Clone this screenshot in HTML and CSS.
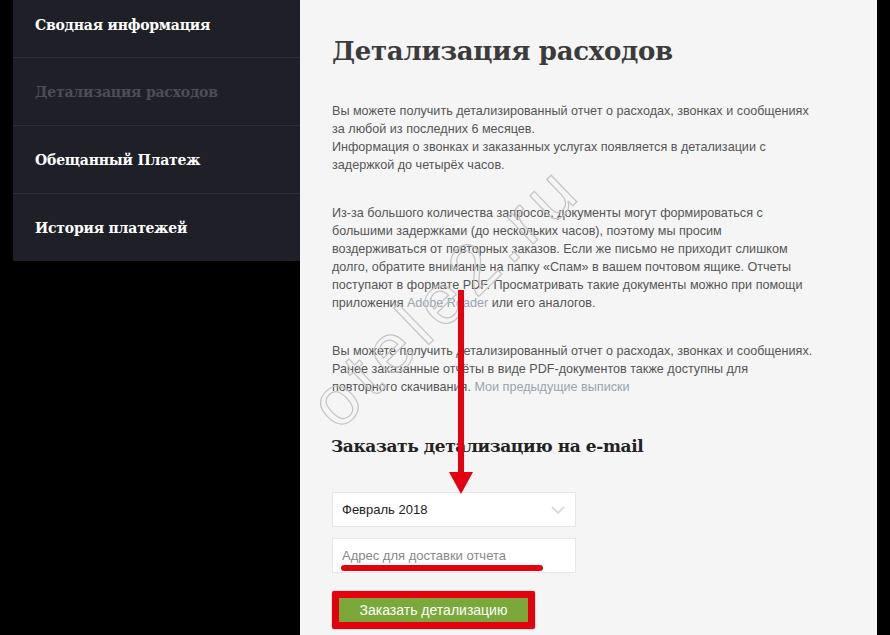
FILE: index.html
```html
<!DOCTYPE html>
<html>
<head>
  <title>Детализация расходов</title>
  <link rel="stylesheet" href="styles.css">
</head>
<body>
  <div class="aside">
    <ul class="menu">
      <li class="menu-item first"><a href="#">Сводная информация</a></li>
      <li class="menu-item active"><a href="#">Детализация расходов</a></li>
      <li class="menu-item"><a href="#">Обещанный Платеж</a></li>
      <li class="menu-item"><a href="#">История платежей</a></li>
    </ul>
  </div>

  <div class="main">
    <h1>Детализация расходов</h1>

    <p class="text">
      Вы можете получить детализированный отчет о расходах, звонках и сообщениях
      за любой из последних 6 месяцев.<br>
      Информация о звонках и заказанных услугах появляется в детализации с
      задержкой до четырёх часов.
    </p>

    <p class="text">
      Из-за большого количества запросов, документы могут формироваться с
      большими задержками (до нескольких часов), поэтому мы просим
      воздерживаться от повторных заказов. Если же письмо не приходит слишком
      долго, обратите внимание на папку «Спам» в вашем почтовом ящике. Отчеты
      поступают в формате PDF. Просматривать такие документы можно при помощи
      приложения <a href="#">Adobe Reader</a> или его аналогов.
    </p>

    <p class="text">
      Вы можете получить детализированный отчет о расходах, звонках и сообщениях.
      Ранее заказанные отчёты в виде PDF-документов также доступны для
      повторного скачивания. <a href="#">Мои предыдущие выписки</a>
    </p>

    <h2>Заказать детализацию на e-mail</h2>

    <form class="order-form">
      <div class="field select">
        <span>Февраль 2018</span>
        <svg class="chevron" width="14" height="8" viewBox="0 0 14 8">
          <path d="M1 1l6 6 6-6" fill="none" stroke="#dcdcdc" stroke-width="2"/>
        </svg>
      </div>
      <div class="field">
        <input type="text" placeholder="Адрес для доставки отчета">
        <span class="mark-line"></span>
      </div>
      <div class="mark-box">
        <button type="button">Заказать детализацию</button>
      </div>
    </form>

    <!-- watermark and annotation arrow -->
    <div class="watermark">otele2.ru</div>
    <div class="arrow">
      <svg width="26" height="205" viewBox="0 0 26 205">
        <rect x="10" y="0" width="6" height="186" fill="#e3000f"/>
        <path d="M1 182h24L13 204z" fill="#e3000f"/>
      </svg>
    </div>
  </div>
</body>
</html>
```

FILE: styles.css
```css
body {
  margin: 0;
  background-color: #000;
  font-family: "Liberation Sans", Arial, sans-serif;
  display: flex;
  height: 635px;
  overflow: hidden;
}

.aside {
  width: 287px;
  padding-left: 13px;
}

.menu {
  list-style: none;
  margin: 0;
  padding: 0;
  background-color: #1f2027;
}

.menu-item {
  height: 67px;
  border-top: 1px solid #2c2d35;
  display: flex;
  align-items: center;
  padding-left: 22px;
}

.menu-item.first {
  height: 57px;
  border-top: none;
  align-items: flex-start;
}

.menu-item.first a {
  margin-top: 17px;
}

.menu-item a {
  font-family: "DejaVu Serif", serif;
  font-weight: bold;
  font-size: 14px;
  color: #fff;
  text-decoration: none;
  letter-spacing: -0.2px;
}

.menu-item.active a {
  color: #4b4e58;
}

.main {
  position: relative;
  width: 545px;
  padding-left: 32px;
  background-color: #f5f5f6;
  overflow: hidden;
}

h1 {
  font-family: "DejaVu Serif", serif;
  font-size: 26px;
  font-weight: bold;
  color: #3b3b3b;
  margin: 36px 0 36px;
  letter-spacing: -0.3px;
}

.text {
  width: 483px;
  font-size: 12.6px;
  line-height: 18px;
  color: #555;
  margin: 0 0 30px;
}

.text a {
  color: #98a4b0;
  text-decoration: none;
}

h2 {
  font-family: "DejaVu Serif", serif;
  font-size: 17px;
  font-weight: bold;
  color: #222;
  margin: 40px 0 36px -1px;
  letter-spacing: -0.4px;
}

.order-form {
  width: 244px;
}

.field {
  position: relative;
  height: 33px;
  background-color: #fff;
  border: 1px solid #e6e6e6;
  margin-bottom: 11px;
  display: flex;
  align-items: center;
}

.field.select span {
  padding-left: 9px;
  font-size: 13px;
  color: #222;
  flex: 1;
}

.chevron {
  margin-right: 10px;
}

.field input {
  width: 100%;
  border: none;
  background: transparent;
  padding: 0 9px;
  font-family: "Liberation Sans", Arial, sans-serif;
  font-size: 13px;
  outline: none;
}

.field input::placeholder {
  color: #888;
}

.mark-line {
  position: absolute;
  left: 8px;
  top: 26px;
  width: 202px;
  height: 6px;
  border-radius: 3px;
  background-color: #e3000f;
}

.mark-box {
  display: inline-block;
  margin-top: 7px;
  border: 7px solid #e3000f;
  border-radius: 2px;
  box-shadow: 0 0 1px #700;
}

button {
  display: block;
  width: 189px;
  height: 24px;
  background-color: #7aa83a;
  color: #fff;
  border: none;
  font-family: "Liberation Sans", Arial, sans-serif;
  font-size: 14px;
  padding: 0;
}

.watermark {
  position: absolute;
  left: 46px;
  top: 370px;
  line-height: 1;
  transform: rotate(-44deg);
  transform-origin: 0 100%;
  font-size: 70px;
  letter-spacing: 8px;
  font-family: "Liberation Sans", Arial, sans-serif;
  color: transparent;
  -webkit-text-stroke: 1.2px #c4c4c4;
  pointer-events: none;
}

.arrow {
  position: absolute;
  left: 148px;
  top: 290px;
}
```
